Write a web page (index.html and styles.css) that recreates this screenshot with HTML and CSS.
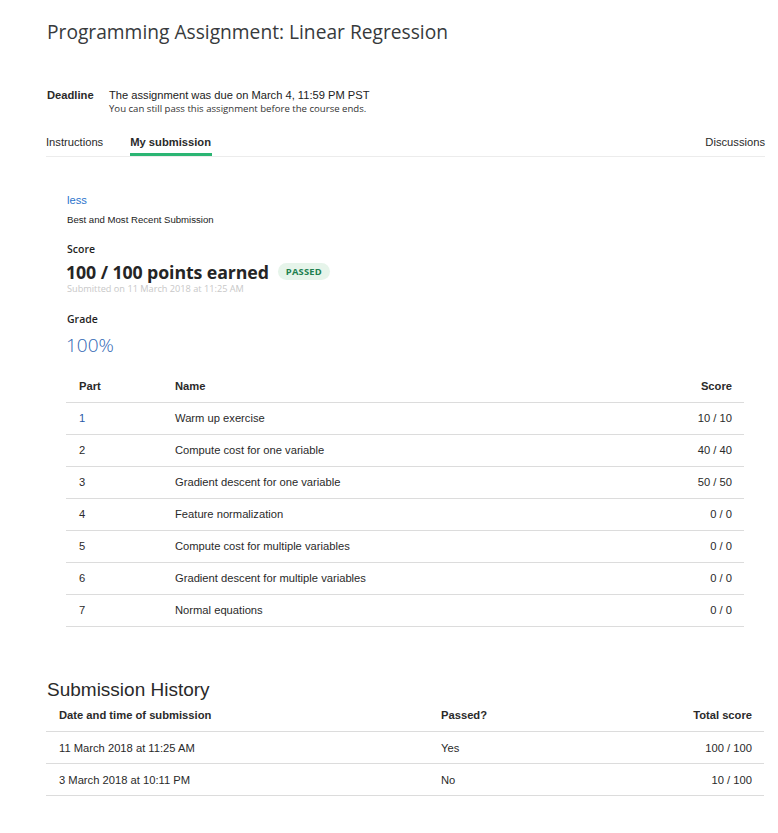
FILE: index.html
```html
<!DOCTYPE html>
<html>
<head>
<meta charset="utf-8">
<link rel="stylesheet" href="styles.css">
</head>
<body>
<div class="page">
  <h1 class="title">Programming Assignment: Linear Regression</h1>

  <div class="deadline">
    <div class="deadline-label">Deadline</div>
    <div class="deadline-body">
      <div class="deadline-main">The assignment was due on March 4, 11:59 PM PST</div>
      <div class="deadline-sub">You can still pass this assignment before the course ends.</div>
    </div>
  </div>

  <nav class="tabs">
    <div class="tab">Instructions</div>
    <div class="tab tab-active">My submission</div>
    <div class="tab tab-right">Discussions</div>
  </nav>

  <section class="submission">
    <a class="less-link">less</a>
    <div class="best">Best and Most Recent Submission</div>

    <div class="label score-label">Score</div>
    <div class="score-row">
      <span class="score-big">100 / 100 points earned</span>
      <span class="badge">PASSED</span>
    </div>
    <div class="submitted">Submitted on 11 March 2018 at 11:25 AM</div>

    <div class="label grade-label">Grade</div>
    <div class="grade">100%</div>

    <table class="parts">
      <thead>
        <tr><th class="c-part">Part</th><th class="c-name">Name</th><th class="c-score">Score</th></tr>
      </thead>
      <tbody>
        <tr><td class="c-part link">1</td><td>Warm up exercise</td><td class="c-score">10 / 10</td></tr>
        <tr><td class="c-part">2</td><td>Compute cost for one variable</td><td class="c-score">40 / 40</td></tr>
        <tr><td class="c-part">3</td><td>Gradient descent for one variable</td><td class="c-score">50 / 50</td></tr>
        <tr><td class="c-part">4</td><td>Feature normalization</td><td class="c-score">0 / 0</td></tr>
        <tr><td class="c-part">5</td><td>Compute cost for multiple variables</td><td class="c-score">0 / 0</td></tr>
        <tr><td class="c-part">6</td><td>Gradient descent for multiple variables</td><td class="c-score">0 / 0</td></tr>
        <tr><td class="c-part">7</td><td>Normal equations</td><td class="c-score">0 / 0</td></tr>
      </tbody>
    </table>
  </section>

  <h2 class="history-title">Submission History</h2>
  <table class="history">
    <thead>
      <tr><th class="h-date">Date and time of submission</th><th class="h-pass">Passed?</th><th class="h-total">Total score</th></tr>
    </thead>
    <tbody>
      <tr><td class="h-date">11 March 2018 at 11:25 AM</td><td class="h-pass">Yes</td><td class="h-total">100 / 100</td></tr>
      <tr><td class="h-date">3 March 2018 at 10:11 PM</td><td class="h-pass">No</td><td class="h-total">10 / 100</td></tr>
    </tbody>
  </table>
</div>
</body>
</html>
```

FILE: styles.css
```css
* { box-sizing: border-box; }
html, body { margin: 0; padding: 0; background: #fff; }
body {
  font-family: "Liberation Sans", Arial, sans-serif;
  font-size: 11.2px;
  color: #1f1f1f;
}
.page {
  width: 719px;
  margin-left: 46px;
  padding-top: 18px;
  padding-bottom: 30px;
}
.title {
  margin: 0 0 0 1px;
  font-family: "Open Sans", sans-serif;
  font-weight: 400;
  font-size: 19.2px;
  line-height: 28px;
  color: #373a3c;
}
.deadline {
  display: flex;
  margin-top: 42px;
  padding-left: 1px;
}
.deadline-label {
  width: 62px;
  font-weight: 700;
  line-height: 14px;
  color: #2a2a2a;
}
.deadline-main { font-size: 11.15px; line-height: 14px; color: #222; }
.deadline-sub {
  font-family: "Open Sans", sans-serif;
  font-size: 9.6px;
  line-height: 14px;
  color: #333;
}
.tabs {
  display: flex;
  margin-top: 19px;
  border-bottom: 1px solid #ececec;
  height: 22px;
}
.tab {
  line-height: 14px;
  color: #2a2a2a;
  margin-right: 26px;
}
.tab-active {
  font-weight: 700;
  border-bottom: 3px solid #2bb573;
  height: 21px;
  margin-right: 0;
  padding-right: 1px;
  margin-left: 1px;
}
.tab-right { margin-left: auto; margin-right: 0; }
.submission {
  padding: 36px 21px 0 20px;
}
.less-link {
  display: block;
  color: #2a73cc;
  line-height: 14px;
  padding-left: 1px;
}
.best {
  margin-top: 7px;
  font-size: 9.6px;
  line-height: 12px;
  color: #222;
  padding-left: 1px;
}
.label {
  font-family: "Open Sans", sans-serif;
  font-weight: 600;
  font-size: 10.5px;
  line-height: 14px;
  color: #1f1f1f;
  padding-left: 1px;
}
.score-label { margin-top: 16px; }
.score-row {
  display: flex;
  align-items: center;
  margin-top: 4px;
  height: 23px;
}
.score-big {
  font-family: "Open Sans", sans-serif;
  font-weight: 700;
  font-size: 17.75px;
  color: #252525;
  letter-spacing: -0.1px;
}
.badge {
  margin-left: 9px;
  background: #e6f4ea;
  color: #21804f;
  font-family: "Open Sans", sans-serif;
  font-weight: 700;
  font-size: 9.4px;
  padding: 2px 8px;
  border-radius: 9px;
  letter-spacing: 0.2px;
}
.submitted {
  font-family: "Open Sans", sans-serif;
  font-size: 9.2px;
  color: #c8c8c8;
  line-height: 11px;
  padding-left: 1px;
}
.grade-label { margin-top: 18px; }
.grade {
  font-family: "Open Sans", sans-serif;
  font-weight: 300;
  font-size: 19px;
  color: #2f66b3;
  margin-top: 7px;
  line-height: 24px;
}
.parts {
  width: 678px;
  margin-top: 13px;
  border-collapse: collapse;
}
.parts th, .parts td {
  height: 32px;
  padding: 0 12px 0 13px;
  border-bottom: 1px solid #dcdcdc;
  text-align: left;
  line-height: 14px;
}
.parts th {
  font-weight: 700;
  color: #2a2a2a;
}
.parts td { color: #2a2a2a; }
.parts .c-part { width: 96px; }
.parts .c-score { text-align: right; }
.parts .link { color: #2a5aa8; }
.history-title {
  margin: 52px 0 0 1px;
  font-family: "Liberation Sans", Arial, sans-serif;
  font-weight: 400;
  font-size: 19px;
  line-height: 22px;
  color: #2a2a2a;
}
.history {
  width: 718px;
  border-collapse: collapse;
}
.history th, .history td {
  height: 32px;
  padding: 0 12px 0 13px;
  border-bottom: 1px solid #dcdcdc;
  text-align: left;
  line-height: 14px;
  color: #2a2a2a;
}
.history th { font-weight: 700; height: 31px; padding-bottom: 2px; }
.history .h-date { width: 382px; }
.history .h-total { text-align: right; }
```
